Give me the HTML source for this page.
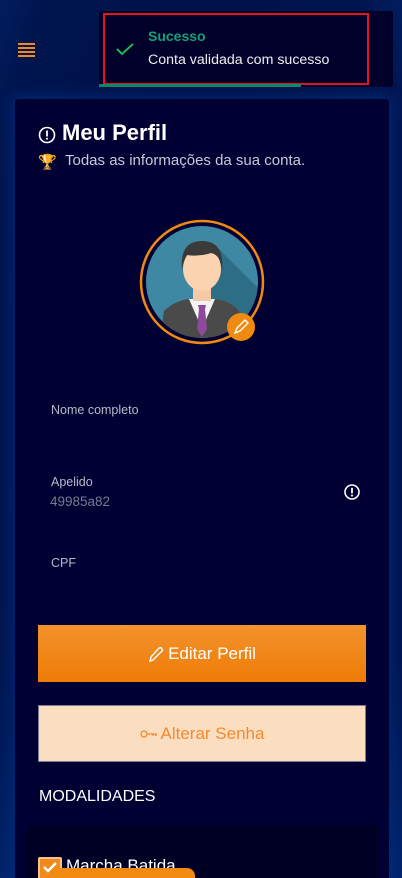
<!DOCTYPE html>
<html><head><meta charset="utf-8"><style>
*{margin:0;padding:0;box-sizing:border-box}
html,body{width:402px;height:878px;overflow:hidden}
body{background:radial-gradient(ellipse at 50% 45%,#000a3a 0%,#00154f 80%,#02246a 100%);font-family:"Liberation Sans",sans-serif;position:relative}
.card{position:absolute;left:15px;top:99px;width:374px;height:800px;background:#000033;border-radius:4px;box-shadow:0 0 14px 4px rgba(0,60,160,.45)}
.ab{position:absolute}
.toast{position:absolute;left:99px;top:11px;width:294px;height:76px;background:#00002a;border-radius:3px}
.red{position:absolute;left:103px;top:13px;width:266px;height:72px;border:2px solid #e8131b}
.bar{position:absolute;left:99px;top:84px;width:202px;height:3px;background:#0f8a67}
.lbl{color:#b8b8c8;font-size:12.5px}
</style></head><body>
<div class="ab" style="left:18px;top:43px;width:17px">
<div style="height:2px;background:#f08a1c;margin-bottom:2px"></div><div style="height:2px;background:#f08a1c;margin-bottom:2px"></div><div style="height:2px;background:#f08a1c;margin-bottom:2px"></div><div style="height:2px;background:#f08a1c"></div></div>
<div class="toast"></div>
<div class="red"></div>
<div class="bar"></div>
<svg class="ab" style="left:115px;top:42px" width="20" height="14" viewBox="0 0 20 14"><path d="M2 7l5 5L18 2" fill="none" stroke="#1db954" stroke-width="2"/></svg>
<div class="ab" style="left:148px;top:28px;color:#13a07a;font-weight:bold;font-size:14px">Sucesso</div>
<div class="ab" style="left:148px;top:52px;color:#eee;font-size:14.2px">Conta validada com sucesso</div>
<div class="card"></div>
<svg class="ab" style="left:38px;top:126px" width="18" height="18" viewBox="0 0 18 18"><circle cx="9" cy="9" r="7.5" fill="none" stroke="#fff" stroke-width="1.6"/><rect x="8.1" y="4.5" width="1.8" height="6" fill="#fff"/><rect x="8.1" y="11.8" width="1.8" height="1.8" fill="#fff"/></svg>
<div class="ab" style="left:62px;top:120px;color:#fff;font-size:22px;font-weight:bold">Meu Perfil</div>
<div class="ab" style="left:38px;top:153px;color:#f0a020;font-size:15px">🏆</div>
<div class="ab" style="left:65px;top:152px;color:#c8c8d8;font-size:15px">Todas as informações da sua conta.</div>
<svg class="ab" style="left:139px;top:219px" width="126" height="126" viewBox="0 0 126 126">
<circle cx="63" cy="63" r="61" fill="none" stroke="#f08a10" stroke-width="2.5"/>
<defs><clipPath id="c"><circle cx="63" cy="63" r="56"/></clipPath></defs>
<circle cx="63" cy="63" r="56" fill="#3f88a4"/>
<g clip-path="url(#c)">
<path d="M80 30L130 80 130 130 60 130z" fill="#2e6d86"/>
<path d="M20 126 L25 92 Q35 82 50 80 L76 80 Q92 82 100 92 L106 126z" fill="#4a4a4a"/>
<path d="M50 80L63 110 76 80z" fill="#f4f4f4"/>
<path d="M59 86L67 86 66 90 68 110 63 118 58 110 60 90z" fill="#8e4a9a"/>
<rect x="54" y="66" width="18" height="16" fill="#f5c9a5"/>
<ellipse cx="63" cy="50" rx="19" ry="22" fill="#fbd3b0"/>
<path d="M43 52 Q40 22 63 22 Q86 22 83 52 Q82 36 72 34 Q60 38 48 36 Q44 42 43 52z" fill="#3a3a3a"/>
</g>
<circle cx="102" cy="108" r="14" fill="#f08a10"/>
<path d="M96 114l2-5 8-8 3 3-8 8z" fill="none" stroke="#fff" stroke-width="1.4"/>
</svg>
<div class="ab lbl" style="left:51px;top:403px">Nome completo</div>
<div class="ab lbl" style="left:51px;top:475px">Apelido</div>
<div class="ab" style="left:50px;top:494px;color:#777a90;font-size:13.5px">49985a82</div>
<svg class="ab" style="left:343px;top:483px" width="18" height="18" viewBox="0 0 18 18"><circle cx="9" cy="9" r="7" fill="none" stroke="#fff" stroke-width="1.6"/><rect x="8.1" y="4.8" width="1.8" height="5.5" fill="#fff"/><rect x="8.1" y="11.6" width="1.8" height="1.8" fill="#fff"/></svg>
<div class="ab lbl" style="left:51px;top:556px">CPF</div>
<div class="ab" style="left:38px;top:625px;width:328px;height:57px;background:linear-gradient(#f3922c,#ee7c06);color:#fff;font-size:17px;display:flex;align-items:center;justify-content:center">
<svg width="16" height="18" viewBox="0 0 16 18" style="margin-right:4px"><path d="M2 16l1-4 8-9q2-1 3 1t-1 3l-8 8z" fill="none" stroke="#fff" stroke-width="1.4"/></svg>Editar Perfil</div>
<div class="ab" style="left:38px;top:705px;width:328px;height:57px;background:#fbdec0;border:1px solid #7a7a9a;color:#f08a30;font-size:17px;display:flex;align-items:center;justify-content:center">
<svg width="18" height="10" viewBox="0 0 18 10" style="margin-right:3px"><circle cx="4" cy="5" r="3" fill="none" stroke="#f08a30" stroke-width="1.3"/><path d="M7 5h10M13 5v2M16 5v2" fill="none" stroke="#f08a30" stroke-width="1.3"/></svg>Alterar Senha</div>
<div class="ab" style="left:39px;top:788px;color:#fff;font-size:16px">MODALIDADES</div>
<div class="ab" style="left:27px;top:825px;width:350px;height:60px;background:#000024"></div>
<div class="ab" style="left:38px;top:857px;width:24px;height:24px;background:#f08a1c;border:2px solid #f6c490;border-radius:2px"></div>
<svg class="ab" style="left:42px;top:861px" width="16" height="12" viewBox="0 0 16 12"><path d="M2 6l4 4 8-8" fill="none" stroke="#fff" stroke-width="2.4"/></svg>
<div class="ab" style="left:66px;top:856px;color:#fff;font-size:17px">Marcha Batida</div>
<div class="ab" style="left:50px;top:868px;width:145px;height:20px;background:#f08a10;border-radius:8px 8px 0 0"></div>
</body></html>
